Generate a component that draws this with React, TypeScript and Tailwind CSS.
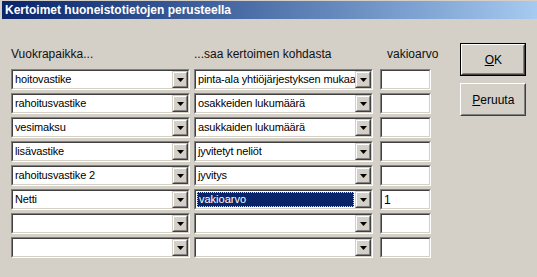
import React from "react";

const rows: { place: string; source: string; value: string; selected?: boolean }[] = [
  { place: "hoitovastike", source: "pinta-ala yhtiöjärjestyksen mukaan", value: "" },
  { place: "rahoitusvastike", source: "osakkeiden lukumäärä", value: "" },
  { place: "vesimaksu", source: "asukkaiden lukumäärä", value: "" },
  { place: "lisävastike", source: "jyvitetyt neliöt", value: "" },
  { place: "rahoitusvastike 2", source: "jyvitys", value: "" },
  { place: "Netti", source: "vakioarvo", value: "1", selected: true },
  { place: "", source: "", value: "" },
  { place: "", source: "", value: "" },
];

function Sunken({ className, children }: { className?: string; children?: React.ReactNode }) {
  return (
    <div className={`h-[21px] border border-[#808080] border-r-white border-b-white ${className ?? ""}`}>
      <div className="flex h-full border border-[#404040] border-r-[#d4d0c8] border-b-[#d4d0c8] bg-white">
        {children}
      </div>
    </div>
  );
}

function Combo({ text, width, selected }: { text: string; width: string; selected?: boolean }) {
  return (
    <Sunken className={width}>
      <div className="flex min-w-0 flex-1 items-center overflow-hidden">
        {selected ? (
          <div className="m-[1px] flex h-[15px] flex-1 items-center border border-dotted border-[#e8d890] bg-[#0a246a] pl-[1px] text-white">
            {text}
          </div>
        ) : (
          <span className="whitespace-nowrap pl-[2px] tracking-[-0.15px] text-black">{text}</span>
        )}
      </div>
      <div className="h-[17px] w-[16px] shrink-0 border border-[#d4d0c8] border-r-[#404040] border-b-[#404040]">
        <div className="flex h-full items-center justify-center border border-white border-r-[#808080] border-b-[#808080] bg-[#d4d0c8]">
          <svg width="7" height="4" viewBox="0 0 7 4" className="mt-[1px]">
            <path d="M0 0h7L3.5 4z" fill="#000" />
          </svg>
        </div>
      </div>
    </Sunken>
  );
}

function Button({ children, isDefault }: { children: React.ReactNode; isDefault?: boolean }) {
  return (
    <div className={`h-[33px] w-[66px] ${isDefault ? "border border-black" : ""}`}>
      <div className="h-full border border-white border-r-[#404040] border-b-[#404040]">
        <div className="flex h-full items-center justify-center border border-[#d4d0c8] border-r-[#808080] border-b-[#808080] bg-[#d4d0c8] text-[12px] text-black">
          {children}
        </div>
      </div>
    </div>
  );
}

export default function App() {
  return (
    <div
      className="h-[277px] w-[537px] overflow-hidden border-l border-t border-l-[#d4d0c8] border-t-[#d4d0c8] bg-[#d4d0c8] pl-[1px] text-[11px] leading-none"
      style={{ fontFamily: '"Liberation Sans", Arial, sans-serif' }}
    >
      <div className="flex h-[18px] items-center bg-gradient-to-r from-[#0a246a] to-[#a6caf0] pl-[3px] text-[12px] font-bold text-white">
        Kertoimet huoneistotietojen perusteella
      </div>
      <div className="flex pl-[9px] pt-[24px]">
        <div className="flex flex-col">
          <div className="flex h-[26px] items-start pt-[5px] text-[12px] text-[#111]">
            <span className="w-[183px]">Vuokrapaikka...</span>
            <span className="w-[190px]">...saa kertoimen kohdasta</span>
            <span className="pl-[3px]">vakioarvo</span>
          </div>
          <div className="flex flex-col gap-[3px]">
            {rows.map((r, i) => (
              <div key={i} className="flex">
                <Combo text={r.place} width="w-[179px]" />
                <Combo text={r.source} width="ml-[4px] w-[179px]" selected={r.selected} />
                <Sunken className="ml-[7px] w-[51px]">
                  <span className="flex items-center pl-[2px] text-[12px] text-black">{r.value}</span>
                </Sunken>
              </div>
            ))}
          </div>
        </div>
        <div className="ml-[22px] flex flex-col gap-[7px]">
          <Button isDefault>
            <span>
              <span className="underline">O</span>K
            </span>
          </Button>
          <Button>
            <span>
              <span className="underline">P</span>eruuta
            </span>
          </Button>
        </div>
      </div>
    </div>
  );
}
